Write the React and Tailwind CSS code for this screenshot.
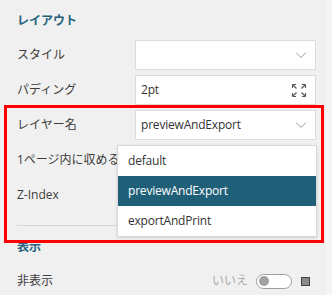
import React from "react";

const font = { fontFamily: '"Open Sans", "Noto Sans CJK JP", sans-serif' };

const Chevron = () => (
  <svg width="12" height="8" viewBox="0 0 12 8" fill="none" stroke="#9a9a9a" strokeWidth="1">
    <path d="M1 1.5 L6 6.5 L11 1.5" />
  </svg>
);

const ExpandIcon = () => (
  <svg width="16" height="15" viewBox="0 0 16 15" fill="none" stroke="#555" strokeWidth="1.1">
    <path d="M1.5 1.5 L5.5 5.5 M1.5 1.5 L1.5 5 M1.5 1.5 L5 1.5" />
    <path d="M14.5 1.5 L10.5 5.5 M14.5 1.5 L14.5 5 M14.5 1.5 L11 1.5" />
    <path d="M1.5 13.5 L5.5 9.5 M1.5 13.5 L1.5 10 M1.5 13.5 L5 13.5" />
    <path d="M14.5 13.5 L10.5 9.5 M14.5 13.5 L14.5 10 M14.5 13.5 L11 13.5" />
  </svg>
);

const Row = ({ label, children }) => (
  <div className="flex items-center h-[30px] mb-[5px]">
    <div className="w-[118px] shrink-0 whitespace-nowrap text-[12px] text-[#3c3c3c]">{label}</div>
    {children}
  </div>
);

const Box = ({ value, icon }) => (
  <div className="flex-1 h-[30px] flex items-center justify-between bg-white border border-[#dcdcdc] pl-[5px] pr-[8px] text-[12px] text-[#333]">
    <span className="tracking-[-0.2px]">{value}</span>
    {icon}
  </div>
);

export default function App() {
  const options = ["default", "previewAndExport", "exportAndPrint"];
  return (
    <div className="relative w-[332px] h-[295px] bg-[#f0f0f0] overflow-hidden flex" style={font}>
      <div className="w-[326px] shrink-0 pl-[17px] pr-[10px] pt-[12px]">
        <div className="h-[18px] mb-[10px] text-[12px] font-semibold text-[#25607c] leading-[18px]">レイアウト</div>
        <Row label="スタイル">
          <Box value="" icon={<Chevron />} />
        </Row>
        <Row label="パディング">
          <Box value="2pt" icon={<ExpandIcon />} />
        </Row>
        <Row label="レイヤー名">
          <Box value="previewAndExport" icon={<Chevron />} />
        </Row>
        <Row label="1ページ内に収める">
          <div className="flex-1" />
        </Row>
        <Row label="Z-Index">
          <Box value="" />
        </Row>
        <div className="h-px bg-[#d6d6d6] mt-[15px]" />
        <div className="h-[18px] mt-[12px] text-[12px] font-semibold text-[#25607c] leading-[18px]">表示</div>
        <div className="flex items-center h-[30px] mt-[10px]">
          <div className="flex-1 text-[12px] text-[#3c3c3c]">非表示</div>
          <span className="text-[12px] text-[#aaaaaa] mr-[8px]">いいえ</span>
          <div className="w-[36px] h-[15px] rounded-full border-[1.5px] border-[#a0a0a0] bg-white flex items-center pl-[2px]">
            <div className="w-[10px] h-[10px] rounded-full bg-[#a0a0a0]" />
          </div>
          <div className="w-[9px] h-[9px] ml-[9px] mr-[6px] bg-[#8a8a8a] border border-[#444]" />
        </div>
      </div>
      <div className="w-[6px] bg-[#f5f5f5]" />

      <div className="absolute left-[117px] top-[145px] w-[200px] bg-white border border-[#d8d8d8] shadow-sm">
        {options.map((o, i) => (
          <div
            key={o}
            className={`h-[30px] flex items-center pl-[10px] text-[12px] tracking-[-0.2px] ${
              i === 1 ? "bg-[#1f5f78] text-white" : "text-[#333]"
            }`}
          >
            {o}
          </div>
        ))}
      </div>

      <div className="absolute left-[4px] top-[105px] w-[320px] h-[138px] border-[3px] border-[#ff0000]" />
    </div>
  );
}
